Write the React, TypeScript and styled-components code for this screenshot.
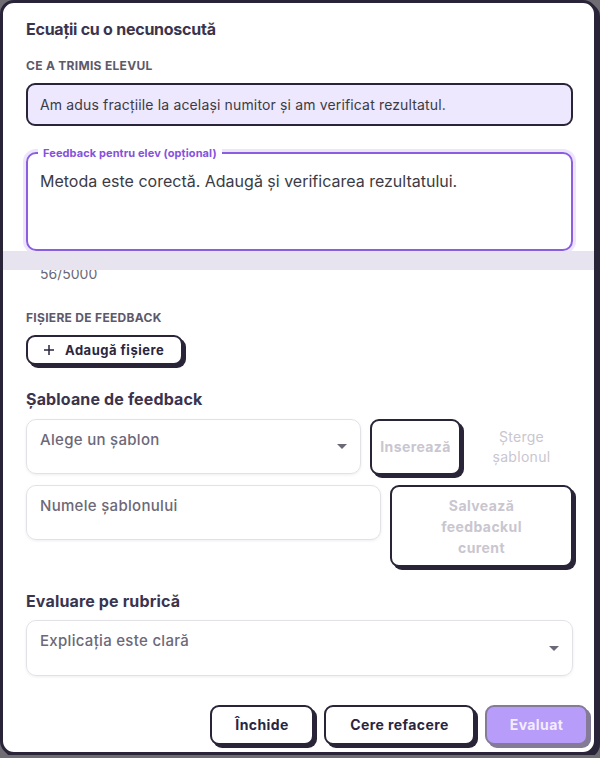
import React from "react";
import styled, { createGlobalStyle } from "styled-components";

const GlobalStyle = createGlobalStyle`
  html, body {
    margin: 0;
    padding: 0;
    background: #6f6c74;
  }
  body {
    font-family: Inter, "Noto Sans", sans-serif;
    color: #2b2640;
  }
  * { box-sizing: border-box; }
`;

const Modal = styled.div`
  position: relative;
  width: 597px;
  height: 755px;
  background: #fff;
  border: 3px solid #2a2438;
  border-radius: 14px;
  box-shadow: 3px 3px 0 #2a2438;
  padding: 15px 21px 0 23px;
  display: flex;
  flex-direction: column;
  overflow: hidden;
`;

const Title = styled.h2`
  margin: 0;
  font-size: 16px;
  font-weight: 700;
  letter-spacing: -0.25px;
  line-height: 22px;
  color: #3a344e;
`;

const Caps = styled.div<{ $top: number }>`
  margin-top: ${(p) => p.$top}px;
  font-size: 12px;
  font-weight: 700;
  letter-spacing: 0.3px;
  line-height: 14px;
  text-transform: uppercase;
  color: #5d5969;
`;

const Submitted = styled.div`
  margin-top: 10px;
  height: 43px;
  display: flex;
  align-items: center;
  padding: 0 12px;
  background: #ede8fd;
  border: 2px solid #2a2438;
  border-radius: 9px;
  font-size: 14px;
  letter-spacing: 0.15px;
  color: #3b3b45;
`;

const FeedbackField = styled.div`
  position: relative;
  margin-top: 26px;
  height: 99px;
  border: 2px solid #8b5ddf;
  border-radius: 10px;
  box-shadow: 0 0 0 3px #ece5fc;
  padding: 16px 12px;
  font-size: 16px;
  line-height: 22px;
  color: #3b3b45;
`;

const FloatLabel = styled.span`
  position: absolute;
  top: -8px;
  left: 10px;
  padding: 0 5px;
  background: #fff;
  font-size: 11px;
  font-weight: 700;
  line-height: 14px;
  letter-spacing: 0.1px;
  color: #8652dc;
`;

const Band = styled.div`
  position: absolute;
  top: 248px;
  left: -3px;
  width: 603px;
  height: 19px;
  background: #e7e3ef;
  z-index: 2;
`;

const Counter = styled.div`
  margin-top: 14px;
  padding-left: 14px;
  font-size: 14px;
  line-height: 18px;
  color: #6b6878;
`;

const ChunkyButton = styled.button<{ $muted?: boolean }>`
  font-family: Inter, "Noto Sans", sans-serif;
  font-size: 14px;
  font-weight: 700;
  letter-spacing: 0.4px;
  line-height: 20px;
  color: ${(p) => (p.$muted ? "#c9c6d0" : "#2b2640")};
  background: #fff;
  border: 2px solid #2a2438;
  border-radius: 9px;
  box-shadow: 3px 3px 0 #2a2438;
  cursor: pointer;
`;

const AddButton = styled(ChunkyButton)`
  align-self: flex-start;
  margin-top: 10px;
  height: 30px;
  width: 157px;
  display: flex;
  align-items: center;
  gap: 10px;
  padding: 0 0 0 15px;
  font-size: 13px;
  letter-spacing: 0.5px;
`;

const Heading = styled.h3<{ $top: number }>`
  margin: ${(p) => p.$top}px 0 0;
  font-size: 16px;
  font-weight: 700;
  line-height: 22px;
  letter-spacing: 0.15px;
  color: #3a344e;
`;

const Row = styled.div<{ $top: number; $cols: string; $h: number }>`
  margin-top: ${(p) => p.$top}px;
  display: grid;
  grid-template-columns: ${(p) => p.$cols};
  column-gap: 9px;
  height: ${(p) => p.$h}px;
  align-items: start;
`;

const Field = styled.div`
  position: relative;
  height: 55px;
  border: 1px solid #e3e1e8;
  border-radius: 10px;
  box-shadow: 0 1px 3px rgba(40, 30, 60, 0.08);
  padding: 10px 13px;
  font-size: 15px;
  font-weight: 500;
  letter-spacing: 0.3px;
  line-height: 20px;
  color: #6c6878;
`;

const Caret = styled.span<{ $top: number }>`
  position: absolute;
  right: 13px;
  top: ${(p) => p.$top}px;
  width: 0;
  height: 0;
  border-left: 5px solid transparent;
  border-right: 5px solid transparent;
  border-top: 5px solid #6c6878;
`;

const InsertButton = styled(ChunkyButton)`
  height: 56px;
  width: 91px;
  padding: 0;
`;

const SaveButton = styled(ChunkyButton)`
  height: 82px;
  padding: 0 40px;
  line-height: 21px;
`;

const LinkText = styled.span`
  justify-self: center;
  margin-top: 8px;
  text-align: center;
  font-size: 14px;
  letter-spacing: 0.3px;
  line-height: 20px;
  color: #c9c6d0;
  width: 80px;
`;

const Footer = styled.div`
  margin-top: 29px;
  margin-right: -15px;
  display: flex;
  justify-content: flex-end;
  gap: 10px;
`;

const FooterButton = styled(ChunkyButton)<{ $w: number }>`
  width: ${(p) => p.$w}px;
  height: 40px;
  padding: 0;
`;

const PrimaryButton = styled(FooterButton)`
  background: #b89cf9;
  color: #f3edff;
  border-color: #847b96;
  box-shadow: 3px 3px 0 #847b96;
`;

const App: React.FC = () => {
  return (
    <>
      <GlobalStyle />
      <Modal>
        <Title>Ecuații cu o necunoscută</Title>
        <Caps $top={19}>Ce a trimis elevul</Caps>
        <Submitted>
          Am adus fracțiile la același numitor și am verificat rezultatul.
        </Submitted>
        <FeedbackField>
          <FloatLabel>Feedback pentru elev (opțional)</FloatLabel>
          Metoda este corectă. Adaugă și verificarea rezultatului.
        </FeedbackField>
        <Counter>56/5000</Counter>
        <Caps $top={28}>Fișiere de feedback</Caps>
        <AddButton>
          <svg width="12" height="12" viewBox="0 0 12 12">
            <path d="M6 1v10M1 6h10" stroke="#2b2640" strokeWidth="1.5" />
          </svg>
          Adaugă fișiere
        </AddButton>
        <Heading $top={23}>Șabloane de feedback</Heading>
        <Row $top={9} $cols="335px 91px 1fr" $h={57}>
          <Field>
            Alege un șablon
            <Caret $top={24} />
          </Field>
          <InsertButton $muted>Inserează</InsertButton>
          <LinkText>Șterge șablonul</LinkText>
        </Row>
        <Row $top={9} $cols="355px 1fr" $h={82}>
          <Field>Numele șablonului</Field>
          <SaveButton $muted>Salvează feedbackul curent</SaveButton>
        </Row>
        <Heading $top={23}>Evaluare pe rubrică</Heading>
        <Field style={{ marginTop: 8, height: 56 }}>
          Explicația este clară
          <Caret $top={25} />
        </Field>
        <Footer>
          <FooterButton $w={104}>Închide</FooterButton>
          <FooterButton $w={151}>Cere refacere</FooterButton>
          <PrimaryButton $w={103}>Evaluat</PrimaryButton>
        </Footer>
        <Band />
      </Modal>
    </>
  );
};

export default App;
